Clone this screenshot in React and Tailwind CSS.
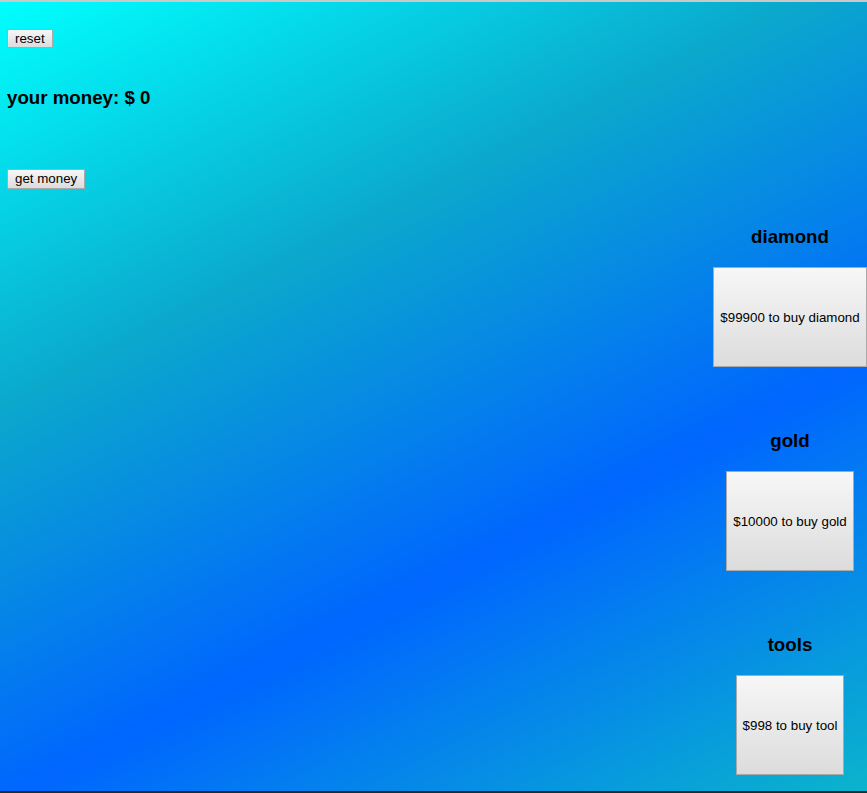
export default function App() {
  const btn =
    "bg-gradient-to-b from-[#f7f7f7] to-[#dcdcdc] border border-[#a9a9a9] text-black text-[13.333px] leading-none";

  const items = [
    { name: "diamond", label: "$99900 to buy diamond" },
    { name: "gold", label: "$10000 to buy gold" },
    { name: "tools", label: "$998 to buy tool" },
  ];

  return (
    <div
      className="h-[793px] overflow-hidden border-t-2 border-b-2 border-t-[#c9c9c9] border-b-[#1e2a30] bg-[linear-gradient(153deg,#00ffff_0%,#0ba8cc_33%,#0066ff_65%,#0bb4cc_100%)] font-['Liberation_Sans',Arial,sans-serif] text-black"
    >
      <div className="px-[7px] pt-[24px]">
        <button className={`${btn} h-[19px] px-[7px]`}>reset</button>
        <h3 className="mt-[37px] text-[18.72px] font-bold leading-[22px]">your money: $ 0</h3>
        <button className={`${btn} mt-[60px] h-[20px] px-[7px]`}>get money</button>
      </div>

      {/* shop */}
      <div className="ml-auto mt-[36px] flex w-[154px] flex-col items-center">
        {items.map((it) => (
          <div key={it.name} className="mb-[63px] flex flex-col items-center">
            <h3 className="text-[18.72px] font-bold leading-[22px]">{it.name}</h3>
            <button className={`${btn} mt-[19px] h-[100px] px-[6px]`}>{it.label}</button>
          </div>
        ))}
      </div>
    </div>
  );
}
